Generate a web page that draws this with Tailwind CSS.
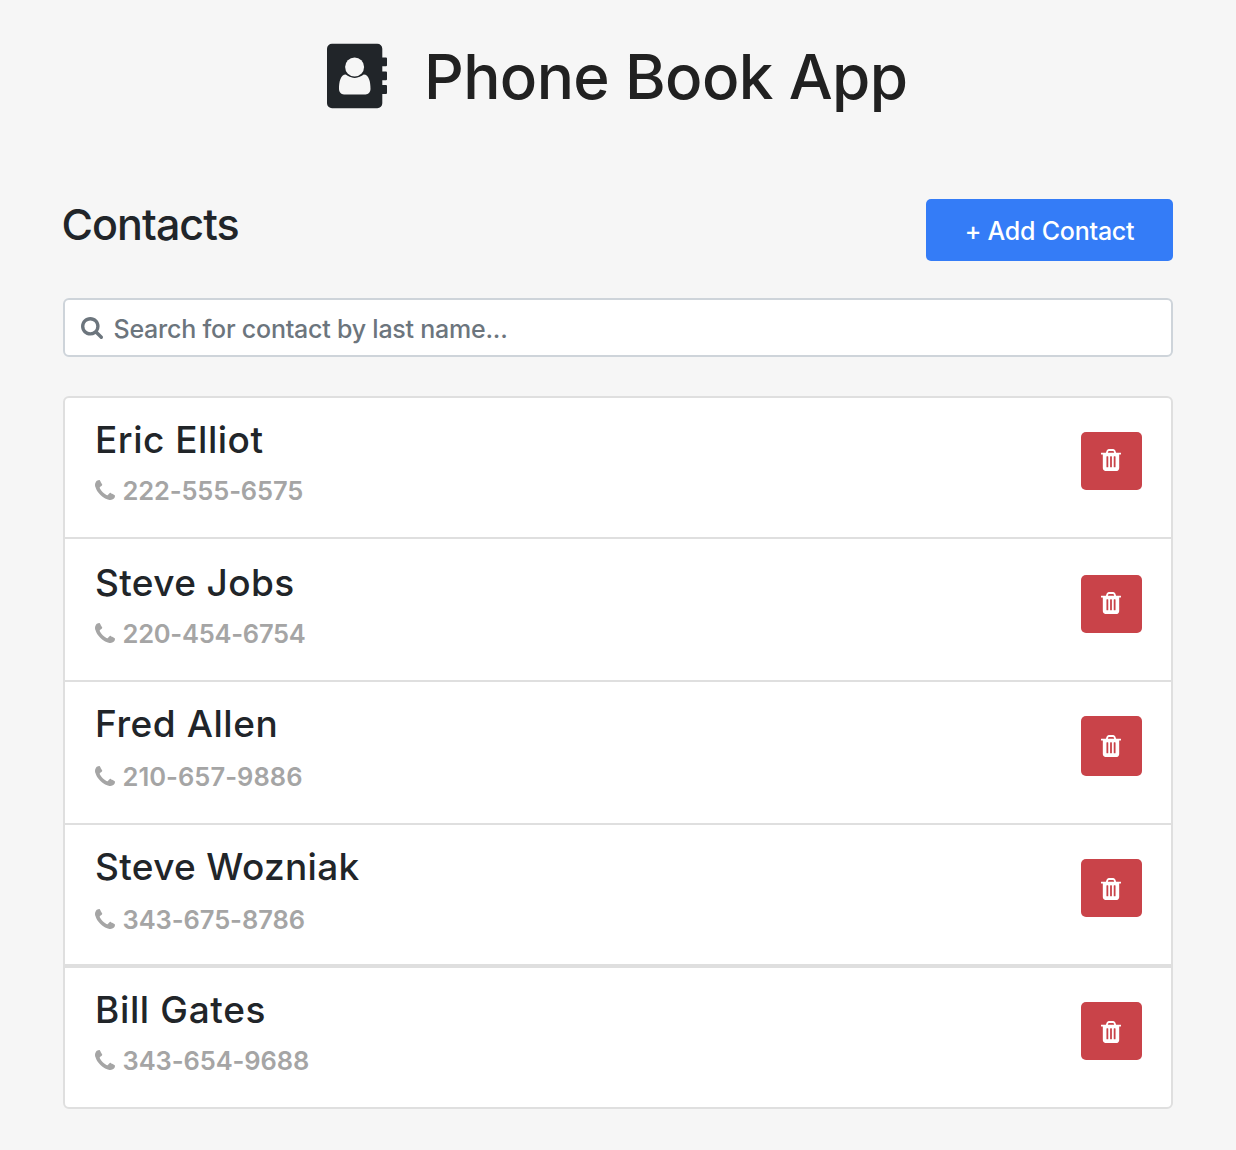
<!DOCTYPE html>
<html lang="en">
<head>
<meta charset="utf-8">
<title>Phone Book App</title>
<script src="https://cdn.jsdelivr.net/npm/@tailwindcss/browser@4"></script>
</head>
<body class="min-h-[1150px] bg-[#f6f6f6] font-[Inter,sans-serif] text-[#212529]">
<svg class="hidden">
  <symbol id="phone" viewBox="192 128 1408 1408"><path d="M1600 1240q0 27-10 70.5t-21 68.5q-21 50-122 106-94 51-186 51-27 0-53-3.5t-57.5-12.5-47-14.5-55.5-20.5-49-18q-98-35-175-83-127-79-264-216t-216-264q-48-77-83-175-3-9-18-49t-20.5-55.5-14.5-47-12.5-57.5-3.5-53q0-92 51-186 56-101 106-122 25-11 68.5-21t70.5-10q14 0 21 3 18 6 53 76 11 19 30 54t35 63.5 31 53.5q3 4 17.5 25t21.5 35.5 7 28.5q0 20-28.5 50t-62 55-62 53-28.5 46q0 9 5 22.5t8.5 20.5 14 24 11.5 19q76 137 174 235t235 174q2 1 19 11.5t24 14 20.5 8.5 22.5 5q18 0 46-28.5t53-62 55-62 50-28.5q14 0 28.5 7t35.5 21.5 25 17.5q25 15 53.5 31t63.5 35 54 30q70 35 76 53 3 7 3 21z"/></symbol>
  <symbol id="trash" viewBox="192 128 1408 1536"><path d="M704 1376v-704q0-14-9-23t-23-9h-64q-14 0-23 9t-9 23v704q0 14 9 23t23 9h64q14 0 23-9t9-23zm256 0v-704q0-14-9-23t-23-9h-64q-14 0-23 9t-9 23v704q0 14 9 23t23 9h64q14 0 23-9t9-23zm256 0v-704q0-14-9-23t-23-9h-64q-14 0-23 9t-9 23v704q0 14 9 23t23 9h64q14 0 23-9t9-23zm-544-992h448l-48-117q-7-9-17-11h-317q-10 2-17 11zm928 32v64q0 14-9 23t-23 9h-96v948q0 83-47 143.5t-113 60.5h-832q-66 0-113-58.5t-47-141.5v-952h-96q-14 0-23-9t-9-23v-64q0-14 9-23t23-9h309l70-167q15-37 54-63t79-26h320q40 0 79 26t54 63l70 167h309q14 0 23 9t9 23z"/></symbol>
</svg>

<header class="flex h-[198px] items-start pl-[327px] pt-[37px]">
  <svg class="mt-[6px] h-[66px] w-[60px] shrink-0" viewBox="0 0 60 66">
    <path fill="#212529" d="M5 .7H50.300a5 5 0 0 1 5 5V14.500h3.700a1 1 0 0 1 1 1v6.700a1 1 0 0 1-1 1h-3.700v5.200h3.700a1 1 0 0 1 1 1v6.800a1 1 0 0 1-1 1h-3.700v4.700h3.700a1 1 0 0 1 1 1v7.200a1 1 0 0 1-1 1h-3.700v9.200a5 5 0 0 1-5 5H5a5 5 0 0 1-5-5V5.700a5 5 0 0 1 5-5z"/>
    <path fill="#f6f6f6" d="M18.800 31.600C13.500 31.600 12 39.300 12 45.800c0 3.400 2 5.600 5 5.600h21.500c3 0 5-2.200 5-5.600 0-6.500-1.500-14.200-6.800-14.200-2.300 1.900-5.400 3.300-9 3.300s-6.700-1.400-8.900-3.300z"/>
    <circle cx="27.600" cy="24" r="10.300" fill="#212529"/>
    <circle cx="27.600" cy="24" r="9.500" fill="#f6f6f6"/>
  </svg>
  <h1 class="ml-[37px] whitespace-nowrap text-[62px] font-medium leading-[80px] tracking-[-0.628px] text-[#212121]">Phone Book App</h1>
</header>

<main class="ml-[63px] w-[1110px]">
  <div class="flex h-[100px] items-start justify-between">
    <h2 class="-ml-[1.500px] text-[43px] font-medium leading-[52px] tracking-[-0.960px]">Contacts</h2>
    <button class="mt-px h-[62px] w-[247px] rounded-[5px] bg-[#347cf7] pt-[2px] text-[25px] font-medium leading-[30px] tracking-[-0.230px] text-white">+ Add Contact</button>
  </div>

  <div class="flex h-[59px] items-center rounded-[6px] border-2 border-[#ced4da] bg-white pl-[16px] text-[#6c757d]">
    <svg class="h-[22px] w-[22px]" viewBox="64 128 1664 1664" fill="currentColor"><path d="M1216 832q0-185-131.5-316.5t-316.5-131.5-316.5 131.5-131.5 316.5 131.5 316.5 316.5 131.5 316.5-131.5 131.5-316.5zm512 832q0 52-38 90t-90 38q-54 0-90-38l-343-342q-179 124-399 124-143 0-273.5-55.5t-225-150-150-225-55.5-273.5 55.5-273.5 150-225 225-150 273.5-55.5 273.5 55.5 225 150 150 225 55.5 273.5q0 220-124 399l343 343q37 37 37 90z"/></svg>
    <span class="ml-[10.500px] pt-[2px] text-[25px] font-[450] leading-[30px] tracking-[-0.230px]">Search for contact by last name...</span>
  </div>

  <ul class="mt-[39px] rounded-[6px] border-2 border-[#dfdfdf] bg-white">
    <li class="flex h-[141px] items-start justify-between border-b-2 border-[#dfdfdf] pl-[30px] pr-[29px]">
      <div class="pt-[20px]">
        <h3 class="text-[37px] font-medium leading-[44px] tracking-[0.520px]">Eric Elliot</h3>
        <p class="mt-[14px] flex text-[25.500px] font-semibold leading-[30px] tracking-[-0.145px] text-[#a5a5a5]"><svg class="mr-[7.500px] mt-[4px] h-[20px] w-[20px] fill-current"><use href="#phone"/></svg>222-555-6575</p>
      </div>
      <button class="mt-[34px] flex h-[58px] w-[61px] justify-center rounded-[5px] bg-[#c94349] pr-px pt-[17px]"><svg class="h-[22px] w-[20px] fill-white"><use href="#trash"/></svg></button>
    </li>
    <li class="flex h-[143px] items-start justify-between border-b-2 border-[#dfdfdf] pl-[30px] pr-[29px]">
      <div class="pt-[22px]">
        <h3 class="text-[37px] font-medium leading-[44px] tracking-[0.370px]">Steve Jobs</h3>
        <p class="mt-[14px] flex text-[25.500px] font-semibold leading-[30px] tracking-[-0.250px] text-[#a5a5a5]"><svg class="mr-[7.500px] mt-[4px] h-[20px] w-[20px] fill-current"><use href="#phone"/></svg>220-454-6754</p>
      </div>
      <button class="mt-[36px] flex h-[58px] w-[61px] justify-center rounded-[5px] bg-[#c94349] pr-px pt-[17px]"><svg class="h-[22px] w-[20px] fill-white"><use href="#trash"/></svg></button>
    </li>
    <li class="flex h-[143px] items-start justify-between border-b-2 border-[#dfdfdf] pl-[30px] pr-[29px]">
      <div class="pt-[20px]">
        <h3 class="text-[37px] font-medium leading-[44px] tracking-[0.550px]">Fred Allen</h3>
        <p class="mt-[16px] flex text-[25.500px] font-semibold leading-[30px] tracking-[0.040px] text-[#a5a5a5]"><svg class="mr-[7.500px] mt-[4px] h-[20px] w-[20px] fill-current"><use href="#phone"/></svg>210-657-9886</p>
      </div>
      <button class="mt-[34px] flex h-[60px] w-[61px] justify-center rounded-[5px] bg-[#c94349] pr-px pt-[19px]"><svg class="h-[22px] w-[20px] fill-white"><use href="#trash"/></svg></button>
    </li>
    <li class="flex h-[143px] items-start justify-between border-b-4 border-[#dfdfdf] pl-[30px] pr-[29px]">
      <div class="pt-[20px]">
        <h3 class="text-[37px] font-medium leading-[44px] tracking-[0.330px]">Steve Wozniak</h3>
        <p class="mt-[16px] flex text-[25.500px] font-semibold leading-[30px] tracking-[-0.067px] text-[#a5a5a5]"><svg class="mr-[7.500px] mt-[4px] h-[20px] w-[20px] fill-current"><use href="#phone"/></svg>343-675-8786</p>
      </div>
      <button class="mt-[34px] flex h-[58px] w-[61px] justify-center rounded-[5px] bg-[#c94349] pr-px pt-[19px]"><svg class="h-[22px] w-[20px] fill-white"><use href="#trash"/></svg></button>
    </li>
    <li class="flex h-[139px] items-start justify-between pl-[30px] pr-[29px]">
      <div class="pt-[20px]">
        <h3 class="text-[37px] font-medium leading-[44px] tracking-[0.640px]">Bill Gates</h3>
        <p class="mt-[14px] flex text-[25.500px] font-semibold leading-[30px] tracking-[-0.080px] text-[#a5a5a5]"><svg class="mr-[7.500px] mt-[4px] h-[20px] w-[20px] fill-current"><use href="#phone"/></svg>343-654-9688</p>
      </div>
      <button class="mt-[34px] flex h-[58px] w-[61px] justify-center rounded-[5px] bg-[#c94349] pr-px pt-[19px]"><svg class="h-[22px] w-[20px] fill-white"><use href="#trash"/></svg></button>
    </li>
  </ul>
</main>
</body>
</html>
